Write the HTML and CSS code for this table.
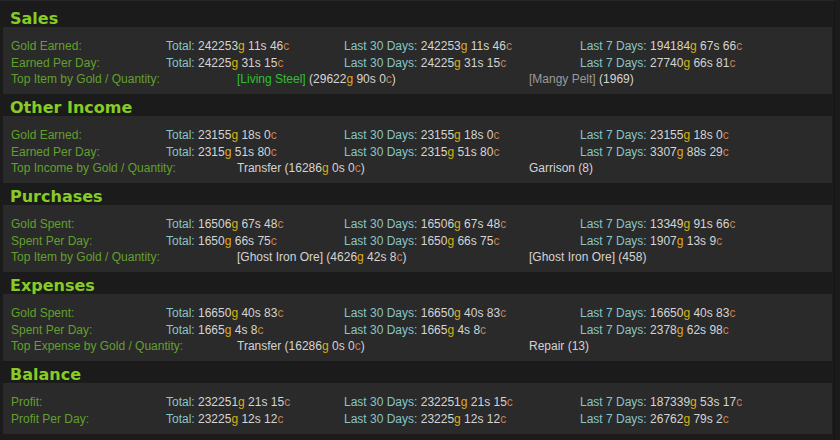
FILE: index.html
```html
<!DOCTYPE html>
<html>
<head>
<meta charset="utf-8">
<link rel="stylesheet" href="styles.css">
</head>
<body>
<div class="page">

  <section class="sec">
    <h2 class="hd">Sales</h2>
    <div class="box">
      <div class="row">
        <span class="lbl">Gold Earned:</span>
        <span><span class="k">Total:</span> 242253<span class="g">g</span> 11s 46<span class="c">c</span></span>
        <span><span class="k">Last 30 Days:</span> 242253<span class="g">g</span> 11s 46<span class="c">c</span></span>
        <span><span class="k">Last 7 Days:</span> 194184<span class="g">g</span> 67s 66<span class="c">c</span></span>
      </div>
      <div class="row">
        <span class="lbl">Earned Per Day:</span>
        <span><span class="k">Total:</span> 24225<span class="g">g</span> 31s 15<span class="c">c</span></span>
        <span><span class="k">Last 30 Days:</span> 24225<span class="g">g</span> 31s 15<span class="c">c</span></span>
        <span><span class="k">Last 7 Days:</span> 27740<span class="g">g</span> 66s 81<span class="c">c</span></span>
      </div>
      <div class="row top">
        <span class="lbl">Top Item by Gold / Quantity:</span>
        <span><span class="unc">[Living Steel]</span> (29622<span class="g">g</span> 90s 0<span class="c">c</span>)</span>
        <span><span class="poor">[Mangy Pelt]</span> (1969)</span>
      </div>
    </div>
  </section>

  <section class="sec">
    <h2 class="hd">Other Income</h2>
    <div class="box">
      <div class="row">
        <span class="lbl">Gold Earned:</span>
        <span><span class="k">Total:</span> 23155<span class="g">g</span> 18s 0<span class="c">c</span></span>
        <span><span class="k">Last 30 Days:</span> 23155<span class="g">g</span> 18s 0<span class="c">c</span></span>
        <span><span class="k">Last 7 Days:</span> 23155<span class="g">g</span> 18s 0<span class="c">c</span></span>
      </div>
      <div class="row">
        <span class="lbl">Earned Per Day:</span>
        <span><span class="k">Total:</span> 2315<span class="g">g</span> 51s 80<span class="c">c</span></span>
        <span><span class="k">Last 30 Days:</span> 2315<span class="g">g</span> 51s 80<span class="c">c</span></span>
        <span><span class="k">Last 7 Days:</span> 3307<span class="g">g</span> 88s 29<span class="c">c</span></span>
      </div>
      <div class="row top">
        <span class="lbl">Top Income by Gold / Quantity:</span>
        <span>Transfer (16286<span class="g">g</span> 0s 0<span class="c">c</span>)</span>
        <span>Garrison (8)</span>
      </div>
    </div>
  </section>

  <section class="sec">
    <h2 class="hd">Purchases</h2>
    <div class="box">
      <div class="row">
        <span class="lbl">Gold Spent:</span>
        <span><span class="k">Total:</span> 16506<span class="g">g</span> 67s 48<span class="c">c</span></span>
        <span><span class="k">Last 30 Days:</span> 16506<span class="g">g</span> 67s 48<span class="c">c</span></span>
        <span><span class="k">Last 7 Days:</span> 13349<span class="g">g</span> 91s 66<span class="c">c</span></span>
      </div>
      <div class="row">
        <span class="lbl">Spent Per Day:</span>
        <span><span class="k">Total:</span> 1650<span class="g">g</span> 66s 75<span class="c">c</span></span>
        <span><span class="k">Last 30 Days:</span> 1650<span class="g">g</span> 66s 75<span class="c">c</span></span>
        <span><span class="k">Last 7 Days:</span> 1907<span class="g">g</span> 13s 9<span class="c">c</span></span>
      </div>
      <div class="row top">
        <span class="lbl">Top Item by Gold / Quantity:</span>
        <span>[Ghost Iron Ore] (4626<span class="g">g</span> 42s 8<span class="c">c</span>)</span>
        <span>[Ghost Iron Ore] (458)</span>
      </div>
    </div>
  </section>

  <section class="sec">
    <h2 class="hd">Expenses</h2>
    <div class="box">
      <div class="row">
        <span class="lbl">Gold Spent:</span>
        <span><span class="k">Total:</span> 16650<span class="g">g</span> 40s 83<span class="c">c</span></span>
        <span><span class="k">Last 30 Days:</span> 16650<span class="g">g</span> 40s 83<span class="c">c</span></span>
        <span><span class="k">Last 7 Days:</span> 16650<span class="g">g</span> 40s 83<span class="c">c</span></span>
      </div>
      <div class="row">
        <span class="lbl">Spent Per Day:</span>
        <span><span class="k">Total:</span> 1665<span class="g">g</span> 4s 8<span class="c">c</span></span>
        <span><span class="k">Last 30 Days:</span> 1665<span class="g">g</span> 4s 8<span class="c">c</span></span>
        <span><span class="k">Last 7 Days:</span> 2378<span class="g">g</span> 62s 98<span class="c">c</span></span>
      </div>
      <div class="row top">
        <span class="lbl">Top Expense by Gold / Quantity:</span>
        <span>Transfer (16286<span class="g">g</span> 0s 0<span class="c">c</span>)</span>
        <span>Repair (13)</span>
      </div>
    </div>
  </section>

  <section class="sec">
    <h2 class="hd">Balance</h2>
    <div class="box">
      <div class="row">
        <span class="lbl">Profit:</span>
        <span><span class="k">Total:</span> 232251<span class="g">g</span> 21s 15<span class="c">c</span></span>
        <span><span class="k">Last 30 Days:</span> 232251<span class="g">g</span> 21s 15<span class="c">c</span></span>
        <span><span class="k">Last 7 Days:</span> 187339<span class="g">g</span> 53s 17<span class="c">c</span></span>
      </div>
      <div class="row">
        <span class="lbl">Profit Per Day:</span>
        <span><span class="k">Total:</span> 23225<span class="g">g</span> 12s 12<span class="c">c</span></span>
        <span><span class="k">Last 30 Days:</span> 23225<span class="g">g</span> 12s 12<span class="c">c</span></span>
        <span><span class="k">Last 7 Days:</span> 26762<span class="g">g</span> 79s 2<span class="c">c</span></span>
      </div>
    </div>
  </section>

</div>
</body>
</html>
```

FILE: styles.css
```css
html, body {
  margin: 0;
  padding: 0;
  background: #1b1b1b;
  height: 100%;
}

.page {
  box-sizing: border-box;
  width: 835px;
  height: 440px;
  padding: 4px 2px 0 3px;
  border-top: 1px solid #262626;
  border-right: 1px solid #141414;
  background: #1b1b1b;
  font-family: "Liberation Sans", Arial, sans-serif;
  font-size: 12px;
  color: #d4d4d4;
}

.sec {
  display: flex;
  flex-direction: column;
}

.hd {
  box-sizing: border-box;
  height: 22px;
  margin: 0;
  padding: 5px 0 0 7px;
  font-family: "DejaVu Sans", sans-serif;
  font-weight: bold;
  font-size: 16px;
  line-height: 17px;
  color: #86cc24;
}

.box {
  background: #2a2a2a;
  padding: 11px 0 6.5px 8px;
}

.row {
  display: grid;
  grid-template-columns: 155px 178px 236px 1fr;
  line-height: 16.5px;
  white-space: nowrap;
}

.row.top {
  grid-template-columns: 226px 292px 1fr;
}

.lbl { color: #62a02e; }
.k { color: #88c5c9; }
.g { color: #dcae14; }
.c { color: #c27f52; }
.unc { color: #2ec12e; }
.poor { color: #9a9a9a; }
```
